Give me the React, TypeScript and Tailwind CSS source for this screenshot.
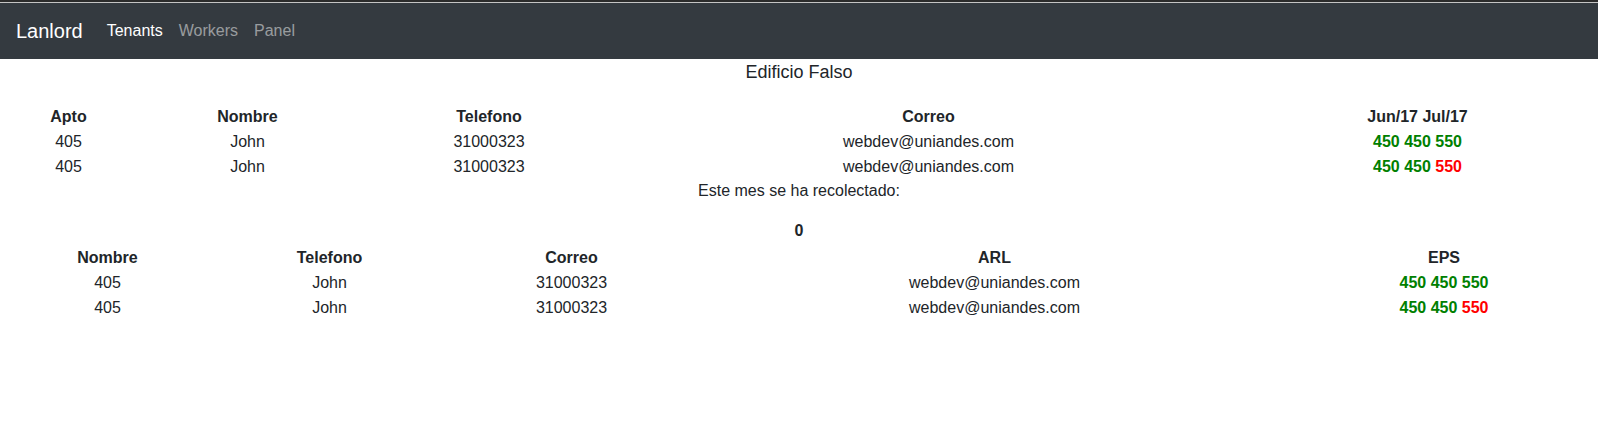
const tenants = [
  { apto: "405", nombre: "John", tel: "31000323", correo: "webdev@uniandes.com", pagos: [true, true, true] },
  { apto: "405", nombre: "John", tel: "31000323", correo: "webdev@uniandes.com", pagos: [true, true, false] },
];

const workers = [
  { nombre: "405", tel: "John", correo: "31000323", arl: "webdev@uniandes.com", eps: [true, true, true] },
  { nombre: "405", tel: "John", correo: "31000323", arl: "webdev@uniandes.com", eps: [true, true, false] },
];

const amounts = ["450", "450", "550"];

function Pagos({ flags }: { flags: boolean[] }) {
  return (
    <span className="font-bold">
      {amounts.map((a, i) => (
        <span key={i} className={flags[i] ? "text-[#008000]" : "text-[#ff0000]"}>
          {a}
          {i < amounts.length - 1 ? " " : ""}
        </span>
      ))}
    </span>
  );
}

export default function App() {
  return (
    <div className="min-h-screen bg-white font-['Liberation_Sans',Arial,sans-serif] text-base leading-6 text-[#212529]">
      {/* barra superior */}
      <div className="h-[2px] bg-[#2b2b2b]" />
      <div className="h-px bg-[#c4c4c4]" />
      <nav className="flex h-[56px] items-center bg-[#343a40] px-4">
        <span className="mr-4 text-[20px] leading-[30px] text-white">Lanlord</span>
        <ul className="flex">
          <li className="px-2 text-white">Tenants</li>
          <li className="px-2 text-white/50">Workers</li>
          <li className="px-2 text-white/50">Panel</li>
        </ul>
      </nav>

      <h1 className="text-center text-[18px] font-normal leading-[27px]">Edificio Falso</h1>

      <table className="mt-[18px] w-full table-fixed border-collapse text-center">
        <colgroup>
          <col className="w-[137px]" />
          <col className="w-[221px]" />
          <col className="w-[262px]" />
          <col className="w-[617px]" />
          <col className="w-[361px]" />
        </colgroup>
        <thead>
          <tr className="h-[25px]">
            <th className="p-0 font-bold">Apto</th>
            <th className="p-0 font-bold">Nombre</th>
            <th className="p-0 font-bold">Telefono</th>
            <th className="p-0 font-bold">Correo</th>
            <th className="p-0 font-bold">Jun/17 Jul/17</th>
          </tr>
        </thead>
        <tbody>
          {tenants.map((t, i) => (
            <tr key={i} className="h-[25px]">
              <td className="p-0">{t.apto}</td>
              <td className="p-0">{t.nombre}</td>
              <td className="p-0">{t.tel}</td>
              <td className="p-0">{t.correo}</td>
              <td className="p-0">
                <Pagos flags={t.pagos} />
              </td>
            </tr>
          ))}
        </tbody>
      </table>

      <p className="mb-4 text-center">Este mes se ha recolectado:</p>
      <p className="text-center font-bold">0</p>

      <table className="mt-[2px] w-full table-fixed border-collapse text-center">
        <colgroup>
          <col className="w-[215px]" />
          <col className="w-[229px]" />
          <col className="w-[255px]" />
          <col className="w-[591px]" />
          <col className="w-[308px]" />
        </colgroup>
        <thead>
          <tr className="h-[25px]">
            <th className="p-0 font-bold">Nombre</th>
            <th className="p-0 font-bold">Telefono</th>
            <th className="p-0 font-bold">Correo</th>
            <th className="p-0 font-bold">ARL</th>
            <th className="p-0 font-bold">EPS</th>
          </tr>
        </thead>
        <tbody>
          {workers.map((w, i) => (
            <tr key={i} className="h-[25px]">
              <td className="p-0">{w.nombre}</td>
              <td className="p-0">{w.tel}</td>
              <td className="p-0">{w.correo}</td>
              <td className="p-0">{w.arl}</td>
              <td className="p-0">
                <Pagos flags={w.eps} />
              </td>
            </tr>
          ))}
        </tbody>
      </table>
    </div>
  );
}
